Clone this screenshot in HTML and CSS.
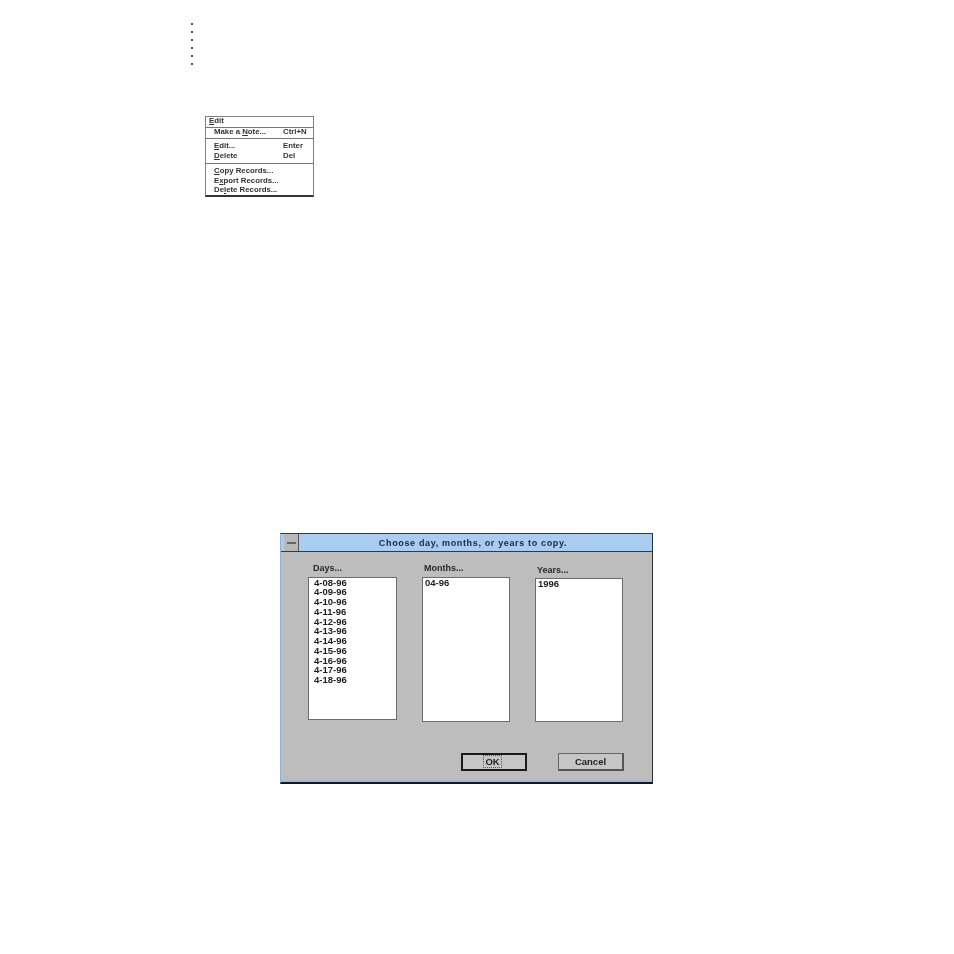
FILE: index.html
```html
<!DOCTYPE html>
<html lang="en">
<head>
<meta charset="utf-8">
<title>Copy records</title>
<link rel="stylesheet" href="styles.css">
</head>
<body>
<main class="page">
  <div class="dots">
    <span class="dot"></span><span class="dot"></span><span class="dot"></span>
    <span class="dot"></span><span class="dot"></span><span class="dot"></span>
  </div>

  <div class="menu">
    <div class="menu-title"><u>E</u>dit</div>
    <div class="menu-group menu-group-first">
      <div class="menu-item"><span class="menu-label">Make a <u>N</u>ote...</span><span>Ctrl+N</span></div>
    </div>
    <div class="menu-group menu-group-second">
      <div class="menu-item"><span class="menu-label"><u>E</u>dit...</span><span>Enter</span></div>
      <div class="menu-item"><span class="menu-label"><u>D</u>elete</span><span>Del</span></div>
    </div>
    <div class="menu-group menu-group-third">
      <div class="menu-item"><span class="menu-label"><u>C</u>opy Records...</span></div>
      <div class="menu-item"><span class="menu-label">E<u>x</u>port Records...</span></div>
      <div class="menu-item"><span class="menu-label">De<u>l</u>ete Records...</span></div>
    </div>
  </div>

  <div class="dialog">
    <div class="titlebar">
      <div class="sysbox"><span class="sysbar"></span></div>
      <div class="title">Choose day, months, or years to copy.</div>
    </div>
    <div class="columns">
      <div class="column column-days">
        <div class="label">Days...</div>
        <ul class="list">
          <li>4-08-96</li><li>4-09-96</li><li>4-10-96</li><li>4-11-96</li>
          <li>4-12-96</li><li>4-13-96</li><li>4-14-96</li><li>4-15-96</li>
          <li>4-16-96</li><li>4-17-96</li><li>4-18-96</li>
        </ul>
      </div>
      <div class="column column-months">
        <div class="label">Months...</div>
        <ul class="list"><li>04-96</li></ul>
      </div>
      <div class="column column-years">
        <div class="label">Years...</div>
        <ul class="list"><li>1996</li></ul>
      </div>
    </div>
    <div class="buttons">
      <button class="btn btn-default" type="button"><span class="focus">OK</span></button>
      <button class="btn" type="button">Cancel</button>
    </div>
  </div>
</main>
</body>
</html>
```
FILE: styles.css
```css
html, body {
  margin: 0;
  padding: 0;
  background: #fff;
}

.page {
  width: 954px;
  height: 954px;
  box-sizing: border-box;
  padding-top: 23px;
  font-family: "Liberation Sans", Arial, sans-serif;
  color: #1a1a1a;
  overflow: hidden;
}

.dots {
  display: flex;
  flex-direction: column;
  gap: 6px;
  margin-left: 191px;
  filter: blur(0.4px);
}

.dot {
  width: 2px;
  height: 2px;
  background: #555;
}

.menu {
  width: 109px;
  height: 81px;
  box-sizing: border-box;
  margin: 51px 0 0 205px;
  border: 1px solid #808080;
  border-bottom: 2px solid #333;
  font-size: 7.8px;
  line-height: 9.6px;
  font-weight: 700;
  color: #333;
  filter: blur(0.5px);
}

.menu-title {
  height: 10px;
  line-height: 8px;
  padding-left: 3px;
  border-bottom: 1px solid #777;
}

.menu-group {
  padding-left: 8px;
  padding-right: 6px;
}

.menu-group-first {
  height: 10px;
  line-height: 8px;
  border-bottom: 1px solid #777;
}

.menu-group-second {
  padding-top: 2px;
  height: 22px;
  border-bottom: 1px solid #777;
}

.menu-group-third {
  padding-top: 2px;
}

.menu-item {
  display: flex;
  height: 9.6px;
}

.menu-label {
  width: 69px;
}

.dialog {
  width: 373px;
  height: 251px;
  box-sizing: border-box;
  margin: 336px 0 0 280px;
  background: #bdbdbd;
  border-top: 1px solid #2c3a4a;
  border-left: 1px solid #8fb2d6;
  border-right: 1px solid #2a3038;
  border-bottom: 2px solid #15181c;
  box-shadow: inset 0 -2px 0 #9dbbdb;
  filter: blur(0.45px);
}

.titlebar {
  display: flex;
  align-items: center;
  height: 17px;
  background: #a9cdf0;
  border-bottom: 1px solid #2c3a4a;
  padding-left: 3px;
  padding-right: 2px;
}

.sysbox {
  display: flex;
  align-items: center;
  justify-content: center;
  width: 14px;
  height: 17px;
  background: #b9b9b9;
  border-right: 1px solid #555;
}

.sysbar {
  width: 9px;
  height: 2px;
  background: #666;
}

.title {
  flex: 1;
  text-align: center;
  font-size: 9px;
  font-weight: 700;
  letter-spacing: 0.65px;
  color: #14284a;
  padding-right: 3px;
}

.columns {
  display: flex;
  gap: 25px;
  padding-left: 27px;
  height: 201px;
}

.column {
  width: 88px;
  display: flex;
  flex-direction: column;
}

.column-days {
  width: 89px;
  padding-top: 11px;
}

.column-months {
  padding-top: 11px;
}

.column-years {
  padding-top: 13px;
}

.label {
  font-size: 9px;
  font-weight: 700;
  line-height: 10px;
  color: #2a2a2a;
  height: 14px;
}

.column-days .label {
  padding-left: 5px;
}

.column-months .label {
  padding-left: 2px;
}

.column-years .label {
  padding-left: 2px;
  height: 13px;
}

.list {
  list-style: none;
  margin: 0;
  padding: 1px 0 0 2px;
  box-sizing: border-box;
  height: 145px;
  background: #fff;
  border: 1px solid #6c6c6c;
  font-size: 9.5px;
  font-weight: 700;
  color: #1c1c1c;
}

.list li {
  height: 9.75px;
  line-height: 8px;
}

.column-days .list {
  height: 143px;
  padding: 0.5px 0 0 5px;
}

.column-years .list {
  height: 144px;
}

.buttons {
  display: flex;
  gap: 31px;
  padding-left: 180px;
}

.btn {
  width: 66px;
  height: 18px;
  box-sizing: border-box;
  padding: 0 0 1px;
  font-family: "Liberation Sans", Arial, sans-serif;
  font-size: 9.5px;
  font-weight: 700;
  color: #222;
  background: #c6c6c6;
  border: 1px solid #666;
  border-right: 2px solid #555;
  border-bottom: 2px solid #555;
}

.btn-default {
  border: 2px solid #1a1a1a;
  padding-right: 3px;
}

.focus {
  outline: 1px dotted #555;
  padding: 0 1px;
}
```
